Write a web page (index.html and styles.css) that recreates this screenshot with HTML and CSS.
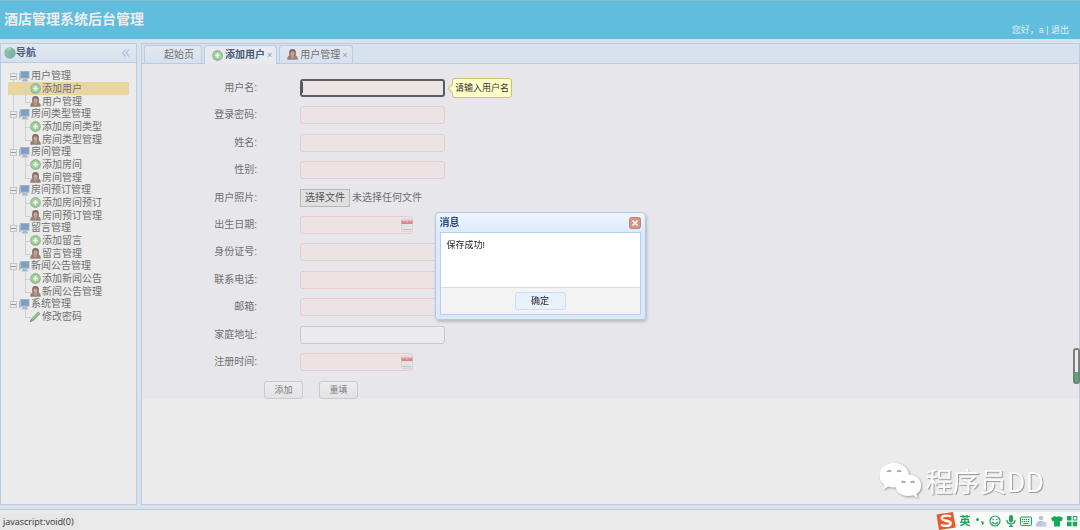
FILE: index.html
```html
<!DOCTYPE html>
<html lang="zh-CN">
<head>
<meta charset="utf-8">
<title>酒店管理系统后台管理</title>
<link rel="stylesheet" href="styles.css">
</head>
<body>
<svg class="sprite" aria-hidden="true">
  <symbol id="pc" viewBox="0 0 10 10"><path d="M1 0h8.500v7H1z" fill="#a3b4c6"/><path d="M2 .8h6.800v5.200H2z" fill="#7c9fc6"/><path d="M0 1.500h1.500v7H0z" fill="#b4bcc4"/><path d="M3.500 7h3.500l1.500 2.500h-6z" fill="#aeb8c1"/></symbol>
  <symbol id="add" viewBox="0 0 10 10"><circle cx="5" cy="5" r="4.900" fill="#8dbb8b"/><circle cx="5" cy="5" r="3.700" fill="#a3cf9f"/><path d="M5 2.800v4.400M2.800 5h4.400" stroke="#f1f7ef" stroke-width="1.500"/></symbol>
  <symbol id="man" viewBox="0 0 10 10"><path d="M.3 9.800V8Q.8 6 3 5.700h4Q9.200 6 9.700 8v1.800z" fill="#978079"/><path d="M2 5.500V3a3 3 0 016 0v2.500L7 6.500H3z" fill="#7f6b63"/><ellipse cx="5" cy="4.300" rx="1.900" ry="2.200" fill="#c9a594"/><path d="M3.500 6.500L5 8l1.500-1.500" stroke="#c9a18e" fill="none"/></symbol>
  <symbol id="pen" viewBox="0 0 10 10"><path d="M0 10l1-3L7.500.5l2 2L3 9z" fill="#76ac6b"/><path d="M2 7.700L8.500 1.500" stroke="#a5d098"/><path d="M0 10l.5-1.700L1.700 9.500z" fill="#666"/></symbol>
  <symbol id="cal" viewBox="0 0 12 14"><rect x=".5" y="1" width="11" height="12.500" rx="1" fill="#e5e2e5" stroke="#d9d4d8"/><path d="M.5 2.500h11V6H.5z" fill="#dc8485"/><path d="M3 1v3M6 2v3M9 1v3" stroke="#eccfd0"/><path d="M1.500 11.500h9" stroke="#c3c5ca"/></symbol>
</svg>

<header class="banner">
  <h1 class="banner-title">酒店管理系统后台管理</h1>
  <div class="account">您好，a | <a href="#">退出</a></div>
</header>

<div class="workspace">
  <aside class="nav">
    <div class="nav-head">
      <svg class="globe" viewBox="0 0 12 12" aria-hidden="true"><circle cx="6" cy="6" r="5.700" fill="#83b2ae"/><path d="M2 3Q5 0 8 1.500L7 4 4 6 5 9 3 10Q0 7 2 3z" fill="#8dc397"/><path d="M8 6l3-1v2L8 10z" fill="#79b98a"/><path d="M3 3q2-2 4-1" stroke="#c5dddc" fill="none"/></svg>
      <h2 class="nav-title">导航</h2>
      <button class="collapse" type="button" aria-label="收起"><svg viewBox="0 0 8 8"><path d="M3.500.5L.8 4l2.700 3.500M7 .5L4.300 4 7 7.500" fill="none" stroke="#9fc0e4" stroke-width="1.200"/></svg></button>
    </div>
    <ul class="tree">
      <li class="group"><div class="branch"><i class="toggle"></i><svg class="ico"><use href="#pc"/></svg>用户管理</div>
        <a class="leaf selected" href="#"><svg class="ico"><use href="#add"/></svg>添加用户</a>
        <a class="leaf" href="#"><svg class="ico"><use href="#man"/></svg>用户管理</a></li>
      <li class="group"><div class="branch"><i class="toggle"></i><svg class="ico"><use href="#pc"/></svg>房间类型管理</div>
        <a class="leaf" href="#"><svg class="ico"><use href="#add"/></svg>添加房间类型</a>
        <a class="leaf" href="#"><svg class="ico"><use href="#man"/></svg>房间类型管理</a></li>
      <li class="group"><div class="branch"><i class="toggle"></i><svg class="ico"><use href="#pc"/></svg>房间管理</div>
        <a class="leaf" href="#"><svg class="ico"><use href="#add"/></svg>添加房间</a>
        <a class="leaf" href="#"><svg class="ico"><use href="#man"/></svg>房间管理</a></li>
      <li class="group"><div class="branch"><i class="toggle"></i><svg class="ico"><use href="#pc"/></svg>房间预订管理</div>
        <a class="leaf" href="#"><svg class="ico"><use href="#add"/></svg>添加房间预订</a>
        <a class="leaf" href="#"><svg class="ico"><use href="#man"/></svg>房间预订管理</a></li>
      <li class="group"><div class="branch"><i class="toggle"></i><svg class="ico"><use href="#pc"/></svg>留言管理</div>
        <a class="leaf" href="#"><svg class="ico"><use href="#add"/></svg>添加留言</a>
        <a class="leaf" href="#"><svg class="ico"><use href="#man"/></svg>留言管理</a></li>
      <li class="group"><div class="branch"><i class="toggle"></i><svg class="ico"><use href="#pc"/></svg>新闻公告管理</div>
        <a class="leaf" href="#"><svg class="ico"><use href="#add"/></svg>添加新闻公告</a>
        <a class="leaf" href="#"><svg class="ico"><use href="#man"/></svg>新闻公告管理</a></li>
      <li class="group"><div class="branch"><i class="toggle"></i><svg class="ico"><use href="#pc"/></svg>系统管理</div>
        <a class="leaf" href="#"><svg class="ico"><use href="#pen"/></svg>修改密码</a></li>
    </ul>
  </aside>

  <main class="center">
    <nav class="tabs">
      <a class="tab home" href="#">起始页</a>
      <a class="tab active" href="#"><svg class="ico"><use href="#add"/></svg>添加用户<span class="x">×</span></a>
      <a class="tab" href="#"><svg class="ico"><use href="#man"/></svg>用户管理<span class="x">×</span></a>
    </nav>
    <form class="form">
      <div class="fields">
        <div class="field"><label for="user">用户名:</label><input class="box focused" id="user" type="text"><span class="tip">请输入用户名</span></div>
        <div class="field"><label for="pwd">登录密码:</label><input class="box" id="pwd" type="password"></div>
        <div class="field"><label for="name">姓名:</label><input class="box" id="name" type="text"></div>
        <div class="field"><label for="sex">性别:</label><input class="box" id="sex" type="text"></div>
        <div class="field"><label for="photo">用户照片:</label><input class="file-input" id="photo" type="file"><label class="file-button" for="photo">选择文件</label><span class="file-name">未选择任何文件</span></div>
        <div class="field"><label for="birth">出生日期:</label><span class="date"><input class="box" id="birth" type="text"><svg class="cal"><use href="#cal"/></svg></span></div>
        <div class="field"><label for="idno">身份证号:</label><input class="box" id="idno" type="text"></div>
        <div class="field"><label for="phone">联系电话:</label><input class="box" id="phone" type="text"></div>
        <div class="field"><label for="mail">邮箱:</label><input class="box" id="mail" type="text"></div>
        <div class="field"><label for="addr">家庭地址:</label><input class="box optional" id="addr" type="text"></div>
        <div class="field"><label for="reg">注册时间:</label><span class="date"><input class="box" id="reg" type="text"><svg class="cal"><use href="#cal"/></svg></span></div>
      </div>
      <div class="actions"><button class="action" type="button">添加</button><button class="action" type="reset">重填</button></div>
    </form>
  </main>
</div>
<footer class="bottom"></footer>

<div class="mask">
  <section class="dialog" role="dialog" aria-labelledby="dlg-title">
    <div class="dialog-head"><h2 class="dialog-title" id="dlg-title">消息</h2>
      <button class="close" type="button" aria-label="关闭"><svg viewBox="0 0 12 12"><rect x=".5" y=".5" width="11" height="11" rx="2" fill="#dc9384" stroke="#c77f73"/><path d="M3.500 3.500l5 5M8.500 3.500l-5 5" stroke="#fff" stroke-width="1.700"/></svg></button></div>
    <div class="dialog-body"><p class="message">保存成功!</p><div class="dialog-foot"><button class="ok" type="button">确定</button></div></div>
  </section>
</div>

<div class="status">javascript:void(0)</div>
<div class="meter"></div>
<div class="brand">
  <svg viewBox="0 0 44 38" aria-hidden="true"><g class="bubbles"><path d="M15 1C6.500 1 .5 6.500.5 13.500c0 4 2 7 5 9.500L4 27.500l5.500-3Q12 25.500 15 25.500c8.500 0 15-5 15-12S23.500 1 15 1z" fill="#fff"/></g><g class="bubbles"><path d="M29 12.500c-7 0-12.500 4.500-12.500 10.700S22 34 29 34q2.500 0 5-.8l4.700 2.800-1.200-4.200c3-2 4.700-5 4.700-8.600 0-6-6-10.700-13.200-10.700z" fill="#fff"/></g><g fill="none" stroke="#999" stroke-width="1.400"><path d="M8.500 10a1.700 1.700 0 013.300 0M18.500 10a1.700 1.700 0 013.300 0M23 21a1.500 1.500 0 013 0M32 21a1.500 1.500 0 013 0"/></g></svg>
  <span>程序员DD</span>
</div>
<div class="ime">
  <svg class="sogou" viewBox="0 0 20 18" aria-hidden="true"><path d="M.5 2.500L17 0l2.800 15.500L3 18z" fill="#e65a2c"/><path d="M15 4.500C11 3 5.500 3.500 5.700 6.500 6 9.500 14.500 8 14.700 11.200 14.800 14.500 8 14.500 5 12.800" fill="none" stroke="#fff" stroke-width="2.300"/></svg>
  <span class="lang">英</span>
  <svg viewBox="0 0 12 12"><circle cx="3.500" cy="4.500" r="1.500"/><path d="M7 6.500q3-1 2.800 1.500Q9.500 10 7.500 11q1-1.500.5-2z"/></svg>
  <svg viewBox="0 0 12 12"><circle cx="6" cy="6" r="5" fill="none" stroke="#19a85a" stroke-width="1.200"/><circle cx="4.200" cy="4.500" r=".8"/><circle cx="7.800" cy="4.500" r=".8"/><path d="M3 7q3 3.500 6 0" fill="none" stroke="#19a85a" stroke-width="1.200"/></svg>
  <svg viewBox="0 0 12 12"><rect x="4" y="0" width="4" height="7.500" rx="2"/><path d="M2 5Q2 9 6 9t4-4M6 9v3M4 11.500h4" fill="none" stroke="#19a85a" stroke-width="1.300"/></svg>
  <svg viewBox="0 0 12 12"><rect x=".5" y="2" width="11" height="8.500" rx="1" fill="#e3f4ea" stroke="#19a85a"/><path d="M2 4.500h8M2 6.500h8" stroke="#19a85a" stroke-dasharray="1.300 .7"/><path d="M3.500 8.500h5" stroke="#19a85a"/></svg>
  <svg viewBox="0 0 12 12" class="dim"><circle cx="6" cy="3" r="2.300"/><path d="M1 11.500Q1 6 5 6h2q3 0 3 5.500z"/><rect x="6" y="7" width="5.500" height="4.500" fill="#bcd3e8"/></svg>
  <svg viewBox="0 0 12 12"><path d="M4 1q2 1.700 4 0l4 2-1.500 3.500L9 6v5.500H3V6l-1.500.5L0 3z"/></svg>
  <svg viewBox="0 0 12 12"><path d="M1 1h4.500v4.500H1zM1 6.700h4.500v4.500H1zM6.700 6.700h4.500v4.500H6.700z"/><rect x="7.300" y="1.500" width="3.500" height="3.500" fill="none" stroke="#19a85a"/></svg>
</div>
</body>
</html>
```

FILE: styles.css
```css
* { box-sizing: border-box; }
body {
  margin: 0;
  height: 100vh;
  display: flex;
  flex-direction: column;
  overflow: hidden;
  background: #dbe1ea;
  color: #707070;
  font: 10px/12px "Liberation Sans", "Noto Sans CJK SC", sans-serif;
}
h1, h2, p, ul { margin: 0; padding: 0; }
a { color: inherit; text-decoration: none; }
button, input { font: inherit; color: inherit; }
button { padding: 0; }
svg { display: block; flex: none; }
.sprite { position: absolute; width: 0; height: 0; }
.ico { width: 11px; height: 11px; }

.banner {
  flex: none;
  display: flex;
  justify-content: space-between;
  height: 39px;
  padding: 0 11px 0 4px;
  background: #60bddd;
  border-top: 1px solid #83bdd6;
  color: #e6eef2;
}
.banner-title { font-size: 14px; line-height: 36px; color: #e9eef1; }
.account { align-self: flex-end; padding-bottom: 3px; font-size: 9px; }

.workspace { flex: 1; display: flex; gap: 4px; padding-top: 4px; min-height: 0; }
.nav { width: 137px; display: flex; flex-direction: column; border: 1px solid #b9cce2; background: #ebebeb; }
.nav-head {
  display: flex;
  align-items: center;
  height: 19px;
  padding: 0 5px 0 3px;
  background: linear-gradient(#e2e8ef, #d6e0ed);
  border-bottom: 1px solid #b9cce2;
}
.globe { width: 12px; height: 12px; }
.nav-title { flex: 1; font-size: 10px; color: #4a607f; }
.collapse { width: 8px; height: 8px; margin-right: 1px; border: 0; background: none; }
.tree { list-style: none; padding: 7px 7px 0; }
.group { position: relative; }
.group:not(:last-child)::before {
  content: "";
  position: absolute;
  left: 5px;
  top: 6px;
  bottom: -6px;
  border-left: 1px solid #d0d0d0;
}
.branch { display: flex; align-items: center; height: 12px; gap: 1px; padding-left: 2px; }
.toggle {
  position: relative;
  width: 7px;
  height: 7px;
  margin-right: 1px;
  border: 1px solid #c6c6c6;
  background: linear-gradient(#999, #999) center / 5px 1px no-repeat #ebebeb;
}
.leaf { position: relative; display: flex; align-items: center; gap: 1px; height: 13px; padding-left: 22px; }
.leaf::before {
  content: "";
  position: absolute;
  left: 17px;
  top: 0;
  width: 5px;
  height: 7px;
  border: solid #d0d0d0;
  border-width: 0 0 1px 1px;
}
.leaf:not(:last-child)::after {
  content: "";
  position: absolute;
  left: 17px;
  top: 6px;
  height: 7px;
  border-left: 1px solid #d0d0d0;
}
.selected { background: #e8d5a0; }

.center { flex: 1; border: 1px solid #b9cce2; background: #ebebeb; }
.tabs {
  display: flex;
  align-items: flex-end;
  gap: 2px;
  height: 20px;
  padding-left: 2px;
  background: #d7e2ee;
  border-bottom: 1px solid #b9cce2;
}
.tab {
  display: flex;
  align-items: center;
  gap: 2px;
  height: 18px;
  padding: 0 4px 0 7px;
  border: 1px solid #b9cce2;
  border-bottom: 0;
  border-radius: 3px 3px 0 0;
  background: linear-gradient(#e1e7ee, #d7e1ee);
}
.home { padding: 0 7px 0 19px; }
.active { height: 19px; margin-bottom: -1px; background: #e8eaef; color: #45597a; font-weight: bold; }
.x { font-size: 9px; font-weight: normal; color: #999; }

.form { background: #e6e6eb; padding-top: 10px; }
.fields { display: grid; grid-auto-rows: 1fr; height: 302px; }
.field { display: flex; align-items: center; }
.field > label:first-child { width: 115px; margin-right: 43px; text-align: right; }
.box {
  width: 145px;
  height: 18px;
  padding: 0 3px;
  border: 1px solid #e9ccd0;
  border-radius: 3px;
  background: #ece3e4;
  outline: 0;
}
.optional { border-color: #c5c9d3; background: #ebebeb; }
.focused {
  border: 2px solid #5c5c60;
  background: linear-gradient(#555, #555) 0 50% / 1px 11px no-repeat #ece3e4;
}
.tip {
  position: relative;
  margin-left: 7px;
  padding: 3px 2px;
  border: 1px solid #d8bc72;
  border-radius: 3px;
  background: #ffffc8;
  color: #333;
  font-size: 9px;
}
.tip::before {
  content: "";
  position: absolute;
  left: -4px;
  top: 6px;
  width: 6px;
  height: 6px;
  transform: rotate(45deg);
  border: solid #d8bc72;
  border-width: 0 0 1px 1px;
  background: #ffffc8;
}
.file-input { position: absolute; width: 1px; height: 1px; opacity: 0; }
.file-button { padding: 2px 4px; border: 1px solid #b8b8b8; background: #e0e0e0; color: #555; }
.file-name { margin-left: 2px; }
.date { position: relative; }
.date .box { display: block; width: 113px; }
.cal { position: absolute; right: 0; top: 2px; width: 12px; height: 14px; }
.actions { display: flex; gap: 16px; padding: 5px 0 0 122px; }
.action {
  width: 39px;
  height: 18px;
  border: 1px solid #cacace;
  border-radius: 3px;
  background: linear-gradient(#ededee, #e2e2e4);
  color: #808080;
  font-size: 9px;
}

.bottom { flex: none; height: 25px; padding-top: 4px; background: #ebebeb content-box; }
.bottom::before { content: ""; display: block; height: 21px; border-top: 1px solid #bfcbda; border-bottom: 1px solid #808080; }

.mask { position: fixed; inset: 0; display: flex; align-items: center; justify-content: center; }
.dialog {
  width: 211px;
  margin-top: 2px;
  padding: 0 4px 4px;
  border: 1px solid #adcaea;
  border-radius: 4px;
  background: linear-gradient(#eff5ff, #dce9fb 20px);
  box-shadow: 1px 2px 3px #b8bcc4;
}
.dialog-head { display: flex; align-items: center; justify-content: space-between; height: 19px; }
.dialog-title { font-size: 10px; color: #26477e; }
.close { width: 12px; height: 12px; border: 0; background: none; }
.dialog-body { border: 1px solid #b3cfee; background: #fff; color: #222; font-size: 9px; }
.message { height: 54px; padding: 6px; }
.dialog-foot { padding: 4px; border-top: 1px solid #ddd; background: #f3f3f3; text-align: center; }
.ok { display: block; width: 51px; height: 18px; margin: 0 auto; border: 1px solid #c9def5; border-radius: 3px; background: #e8f1fd; }

.status {
  position: absolute;
  left: 0;
  bottom: 1px;
  padding: 2px 5px 2px 3px;
  border-radius: 0 3px 0 0;
  background: #e6e6e6;
  color: #333;
  font: 9px/11px "Open Sans", "Noto Sans", sans-serif;
}
.meter {
  position: absolute;
  right: 0;
  top: 348px;
  width: 7px;
  height: 36px;
  border: 2px solid #7d7d7d;
  border-radius: 3px;
  background: linear-gradient(#eee 22px, #3fb878 22px);
}
.brand {
  position: absolute;
  right: 36px;
  bottom: 30px;
  display: flex;
  align-items: center;
  gap: 3px;
  color: #fcfcfc;
  font: 27px/38px "Noto Sans CJK SC", sans-serif;
  text-shadow: 1px 1px 1px #999;
}
.brand svg { width: 44px; height: 38px; }
.bubbles { filter: drop-shadow(1px 1px 1px #999); }
.ime {
  position: absolute;
  right: 0;
  bottom: 0;
  display: flex;
  align-items: center;
  justify-content: space-between;
  width: 144px;
  height: 18px;
  padding-right: 2px;
  background: linear-gradient(#fafafa, #fafafa) 8px 0 no-repeat;
  fill: #19a85a;
}
.ime svg { width: 12px; height: 12px; }
.ime .sogou { width: 20px; height: 18px; }
.ime .dim { fill: #b8c4d2; }
.lang { color: #19a85a; font-size: 11px; font-weight: bold; }
```
